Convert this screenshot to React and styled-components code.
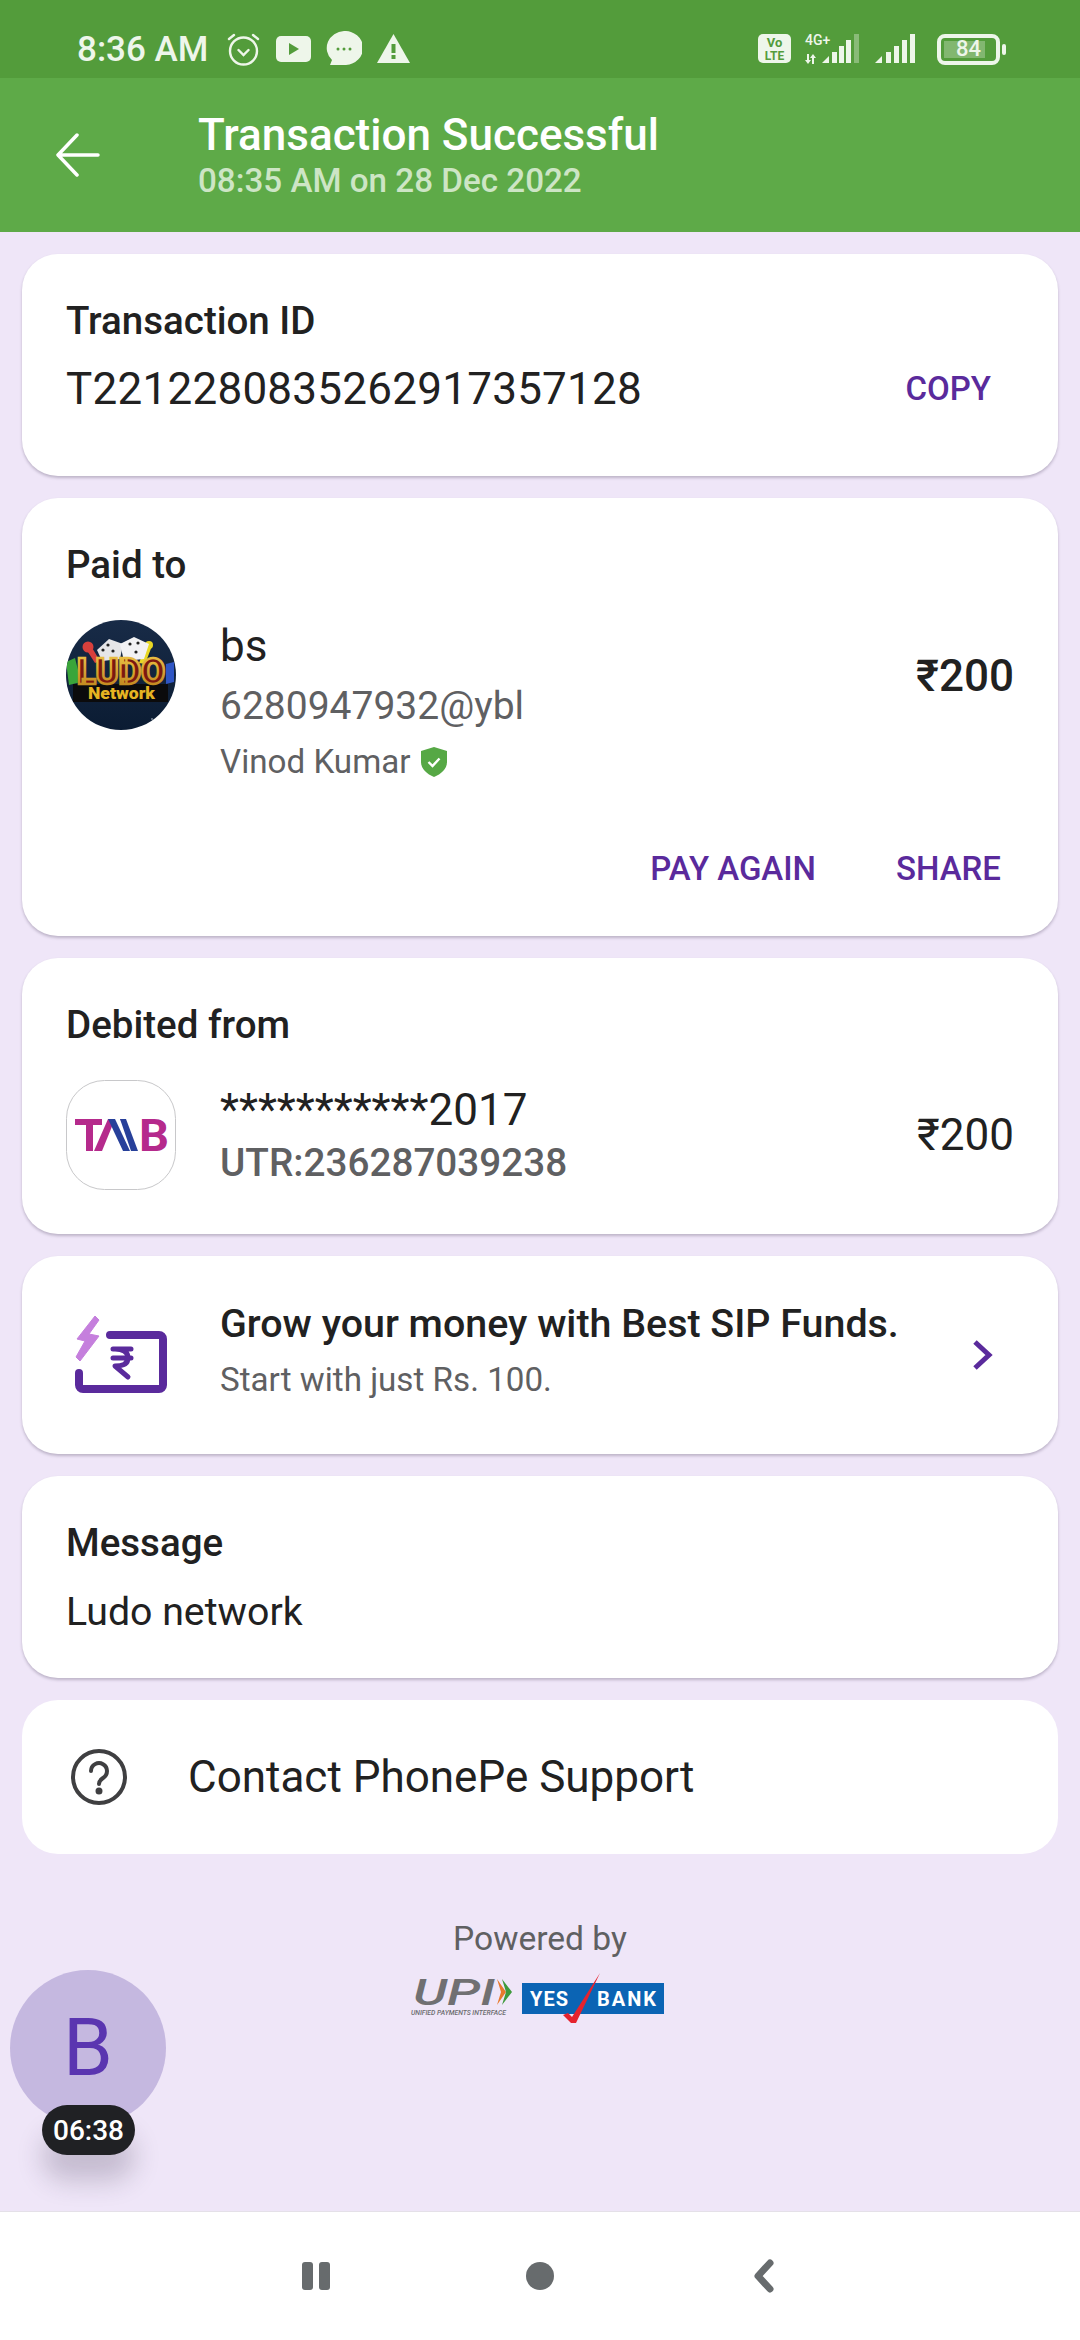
import React from 'react';
import styled, { createGlobalStyle } from 'styled-components';

const GlobalStyle = createGlobalStyle`
  html, body { margin: 0; padding: 0; background: #efe6f8; }
  * { box-sizing: border-box; }
`;

const Page = styled.div`
  position: relative;
  width: 1080px;
  height: 2340px;
  display: flex;
  flex-direction: column;
  overflow: hidden;
  background: #efe6f8;
  font-family: Roboto, "Noto Sans", sans-serif;
  color: #212121;
`;

const StatusBar = styled.div`
  height: 78px;
  flex: none;
  display: flex;
  align-items: center;
  justify-content: space-between;
  padding: 20px 80px 0 77px;
  background: #539c3b;
  color: #eef6ea;
`;
const StatusGroup = styled.div`
  display: flex;
  align-items: center;
  gap: ${(p) => p.$gap || 14}px;
`;
const Clock = styled.span`
  font-size: 35px;
  font-weight: 500;
  margin-right: 3px;
`;
const NetBlock = styled.div`
  position: relative;
  width: 56px;
  height: 30px;
`;
const NetLabel = styled.span`
  position: absolute;
  left: 0;
  top: -2px;
  font-size: 14px;
  font-weight: 500;
  line-height: 16px;
`;
const Battery = styled.div`
  position: relative;
  width: 63px;
  height: 31px;
  border: 4px solid #eef6ea;
  border-radius: 8px;
  display: flex;
  align-items: center;
  justify-content: center;
  font-size: 22px;
  font-weight: 500;
  line-height: 1;
  margin-left: 8px;
  &::before {
    content: '';
    position: absolute;
    left: 3px;
    top: 3px;
    bottom: 3px;
    width: 41px;
    background: rgba(238, 246, 234, 0.3);
  }
  &::after {
    content: '';
    position: absolute;
    right: -10px;
    top: 6px;
    width: 4px;
    height: 11px;
    border-radius: 2px;
    background: #eef6ea;
  }
`;

const Header = styled.header`
  height: 154px;
  flex: none;
  display: flex;
  align-items: center;
  padding: 0 0 0 56px;
  background: #5eaa48;
  color: #fff;
`;
const BackIcon = styled.svg`
  width: 44px;
  height: 44px;
  margin-right: 98px;
  flex: none;
`;
const HeaderTitle = styled.div`
  font-size: 44px;
  font-weight: 500;
  line-height: 50px;
`;
const HeaderSub = styled.div`
  font-size: 33.200px;
  font-weight: 500;
  line-height: 38px;
  margin-top: 2px;
  color: #cde5c5;
`;

const Content = styled.main`
  flex: 1;
  display: flex;
  flex-direction: column;
  gap: 22px;
  padding: 22px 22px 0;
`;
const Card = styled.section`
  height: ${(p) => p.$h}px;
  flex: none;
  padding: 0 44px;
  background: #fff;
  border-radius: 36px;
  box-shadow: 0 2px 3px rgba(60, 50, 80, 0.28);
  display: flex;
  flex-direction: column;
`;
const Label = styled.div`
  font-size: 38.500px;
  font-weight: 500;
  line-height: 44px;
  margin-top: 45px;
`;
const Row = styled.div`
  display: flex;
  align-items: ${(p) => p.$align || 'center'};
  margin-top: ${(p) => p.$top || 0}px;
`;
const BigValue = styled.div`
  flex: 1;
  font-size: 44px;
  letter-spacing: 0.25px;
  line-height: 52px;
`;
const TextLink = styled.span`
  font-size: 33px;
  font-weight: 500;
  line-height: 39px;
  color: #5a2a9c;
`;
const CopyLink = styled(TextLink)`
  margin-right: 23px;
  margin-top: -2px;
`;
const Info = styled.div`
  flex: 1;
  display: flex;
  flex-direction: column;
  margin-left: 44px;
`;
const Name = styled.div`
  font-size: 44px;
  line-height: 52px;
`;
const Upi = styled.div`
  font-size: 39px;
  line-height: 46px;
  margin-top: 11px;
  color: #5f6062;
`;
const Verified = styled.div`
  display: flex;
  align-items: center;
  gap: 10px;
  font-size: 33.200px;
  line-height: 40px;
  margin-top: 13px;
  color: #5f6062;
`;
const Amount = styled.div`
  font-size: 44px;
  font-weight: ${(p) => (p.$bold ? 500 : 400)};
  line-height: 52px;
`;
const AmountTop = styled(Amount)`
  margin-top: 30px;
`;
const Actions = styled.div`
  display: flex;
  justify-content: flex-end;
  gap: 80px;
  padding-right: 13px;
  margin-top: 67px;
`;
const Utr = styled.div`
  font-size: 38.700px;
  font-weight: 500;
  line-height: 46px;
  margin-top: 4px;
  color: #5f6062;
`;
const LogoBox = styled.svg`
  width: 110px;
  height: 110px;
  flex: none;
`;
const PromoCard = styled(Card)`
  flex-direction: row;
  align-items: center;
  padding: 0 62px 0 53px;
`;
const PromoIcon = styled.svg`
  width: 92px;
  height: 79px;
  flex: none;
  margin-top: -2px;
`;
const PromoText = styled.div`
  flex: 1;
  margin-left: 53px;
  margin-top: -9px;
`;
const PromoTitle = styled.div`
  font-size: 39.400px;
  font-weight: 500;
  line-height: 46px;
`;
const PromoSub = styled.div`
  font-size: 33.200px;
  line-height: 40px;
  margin-top: 13px;
  color: #5f6062;
`;
const Body = styled.div`
  font-size: 39.250px;
  line-height: 46px;
  margin-top: 24px;
`;
const SupportCard = styled(Card)`
  flex-direction: row;
  align-items: center;
  padding: 0 0 0 48px;
  box-shadow: none;
`;
const SupportText = styled.div`
  font-size: 44px;
  margin-left: 60px;
`;
const Powered = styled.div`
  display: flex;
  flex-direction: column;
  align-items: center;
  margin-top: 43px;
  color: #5f6062;
  font-size: 33.600px;
  line-height: 40px;
`;
const PartnerLogos = styled.svg`
  width: 260px;
  height: 54px;
  margin-top: 11px;
`;

const Floating = styled.div`
  position: absolute;
  left: 10px;
  top: 1970px;
  width: 156px;
  height: 156px;
  border-radius: 50%;
  background: #c5b8e0;
  display: flex;
  align-items: center;
  justify-content: center;
  font-size: 80px;
  color: #5a35b0;
`;
const TimerPill = styled.div`
  position: absolute;
  left: 42px;
  top: 2105px;
  width: 93px;
  height: 50px;
  border-radius: 25px;
  background: #202124;
  color: #fff;
  font-size: 28px;
  font-weight: 500;
  display: flex;
  align-items: center;
  justify-content: center;
  box-shadow: 0 26px 26px rgba(50, 40, 70, 0.22);
`;

const NavBar = styled.nav`
  height: 129px;
  flex: none;
  display: flex;
  align-items: center;
  padding-left: 302px;
  background: #fff;
  border-top: 1px solid #e4e0e8;
`;
const PauseIcon = styled.div`
  width: 28px;
  height: 28px;
  display: flex;
  justify-content: space-between;
  &::before, &::after {
    content: '';
    width: 11px;
    border-radius: 3px;
    background: #676b6d;
  }
`;
const HomeDot = styled.div`
  width: 28px;
  height: 28px;
  margin-left: 196px;
  border-radius: 50%;
  background: #676b6d;
`;
const BackChevron = styled.svg`
  width: 22px;
  height: 34px;
  margin-left: 199px;
`;

const BrandAvatar = () => (
  <LogoBox viewBox="0 0 110 110">
    <defs>
      <clipPath id="disc"><circle cx="55" cy="55" r="55" /></clipPath>
      <linearGradient id="sky" x1="0" y1="0" x2="0" y2="1">
        <stop offset="0" stopColor="#182b47" />
        <stop offset="1" stopColor="#0b1c33" />
      </linearGradient>
      <linearGradient id="gold" x1="0" y1="0" x2="0" y2="1">
        <stop offset="0" stopColor="#f2c94a" />
        <stop offset="1" stopColor="#b97e18" />
      </linearGradient>
    </defs>
    <g clipPath="url(#disc)">
      <rect width="110" height="110" fill="url(#sky)" />
      <path d="M0 42l9-4 6 24-12 3z" fill="#3aa53a" />
      <path d="M100 44l8-2v20l-8 2z" fill="#2f55c4" />
      <circle cx="22" cy="27" r="5.500" fill="#d8403c" />
      <path d="M20 29l5-3 9 15-5 2z" fill="#d8403c" />
      <circle cx="83" cy="25" r="4" fill="#e8d825" />
      <path d="M80 25l6 1-7 18-6-1z" fill="#e8d825" />
      <path d="M31 30l12-11 14 5-3 15-18 2z" fill="#e6e6e8" />
      <path d="M54 24l14-7 15 7-5 15-20 2z" fill="#f2f2f4" />
      <circle cx="42" cy="25" r="1.600" fill="#222" />
      <circle cx="37" cy="30" r="1.600" fill="#222" />
      <circle cx="47" cy="31" r="1.600" fill="#222" />
      <circle cx="64" cy="24" r="1.600" fill="#222" />
      <circle cx="72" cy="23" r="1.600" fill="#222" />
      <circle cx="70" cy="32" r="1.600" fill="#222" />
      <rect x="7" y="64" width="95" height="18" fill="#0b0b0c" />
      <text x="11" y="64" fontFamily="Roboto" fontWeight="900" fontSize="37" fill="#7c1810" stroke="url(#gold)" strokeWidth="2.600" textLength="88" lengthAdjust="spacingAndGlyphs">LUDO</text>
      <text x="22" y="79" fontFamily="Roboto" fontWeight="900" fontSize="16" fill="#e6b422" textLength="67" lengthAdjust="spacingAndGlyphs">Network</text>
      <circle cx="86" cy="99" r="0.800" fill="#cfd8e6" />
    </g>
  </LogoBox>
);

const BankLogo = () => (
  <LogoBox viewBox="0 0 110 110">
    <rect x="0.500" y="0.500" width="109" height="109" rx="38" fill="#fff" stroke="#c8c8ca" />
    <path d="M9 39h27v6h-9v26h-7V45H9z" fill="#b52a8c" />
    <path d="M28 71l14-32h7L36 71z" fill="#b52a8c" />
    <path d="M54 39h6L60 50z" fill="#b52a8c" />
    <path d="M42 39h7l15 32h-7z" fill="#27409a" />
    <path d="M54 39h6l12 32h-7z" fill="#27409a" />
    <text x="73" y="71" fontFamily="Roboto" fontWeight="700" fontSize="45" fill="#b52a8c" textLength="30" lengthAdjust="spacingAndGlyphs">B</text>
  </LogoBox>
);

const App = () => (
  <Page>
    <GlobalStyle />
    <StatusBar>
      <StatusGroup $gap={15}>
        <Clock>8:36 AM</Clock>
        <svg width="35" height="36" viewBox="0 0 35 36" fill="none" stroke="#eef6ea" strokeWidth="2.400" strokeLinecap="round">
          <circle cx="17.500" cy="20" r="13.500" />
          <path d="M12.500 19l5 5 5-5M3 8l5-4M32 8l-5-4" />
        </svg>
        <svg width="35" height="27" viewBox="0 0 35 27">
          <rect width="35" height="26" rx="5" fill="#eef6ea" />
          <path d="M13 7l10 6-10 6z" fill="#539c3b" />
        </svg>
        <svg width="36" height="36" viewBox="0 0 36 36">
          <path d="M18 0a18 17 0 0 1 2 34H4l2-5A18 17 0 0 1 18 0z" fill="#eef6ea" />
          <circle cx="12" cy="18" r="1.500" fill="#539c3b" />
          <circle cx="18" cy="18" r="1.500" fill="#539c3b" />
          <circle cx="24" cy="18" r="1.500" fill="#539c3b" />
        </svg>
        <svg width="33" height="30" viewBox="0 0 33 30">
          <path d="M16.500 0L33 29H0z" fill="#eef6ea" />
          <rect x="14.500" y="10" width="4" height="9" fill="#539c3b" />
          <rect x="14.500" y="21" width="4" height="4" fill="#539c3b" />
        </svg>
      </StatusGroup>
      <StatusGroup $gap={14}>
        <svg width="33" height="30" viewBox="0 0 33 30">
          <rect width="33" height="29" rx="5" fill="#eef6ea" />
          <text x="16.500" y="13" textAnchor="middle" fontFamily="Roboto" fontWeight="700" fontSize="13" fill="#539c3b">Vo</text>
          <text x="16.500" y="26" textAnchor="middle" fontFamily="Roboto" fontWeight="700" fontSize="12" fill="#539c3b">LTE</text>
        </svg>
        <NetBlock>
          <svg width="56" height="30" viewBox="0 0 56 30" fill="#eef6ea">
            <path d="M2 20h2v6h2l-3 4-3-4h2zM8 20l3 4H9v6H7v-6H5z" />
            <path d="M17 29l7-7v7z" />
            <rect x="27" y="18" width="5" height="11" />
            <rect x="34" y="12" width="5" height="17" />
            <rect x="41" y="6" width="5" height="23" />
            <rect x="49" y="0" width="5" height="29" opacity="0.35" />
          </svg>
          <NetLabel>4G+</NetLabel>
        </NetBlock>
        <svg width="40" height="30" viewBox="0 0 40 30" fill="#eef6ea">
          <path d="M0 29l7-7v7z" />
          <rect x="11" y="18" width="5" height="11" />
          <rect x="19" y="12" width="5" height="17" />
          <rect x="27" y="6" width="5" height="23" />
          <rect x="35" y="0" width="5" height="29" />
        </svg>
        <Battery>84</Battery>
      </StatusGroup>
    </StatusBar>

    <Header>
      <BackIcon viewBox="0 0 44 44" fill="none" stroke="#fff" strokeWidth="3.500" strokeLinecap="round" strokeLinejoin="round">
        <path d="M42 22H3M21 2L2 22l19 20" />
      </BackIcon>
      <div>
        <HeaderTitle>Transaction Successful</HeaderTitle>
        <HeaderSub>08:35 AM on 28 Dec 2022</HeaderSub>
      </div>
    </Header>

    <Content>
      <Card $h={222}>
        <Label>Transaction ID</Label>
        <Row $top={20}>
          <BigValue>T2212280835262917357128</BigValue>
          <CopyLink>COPY</CopyLink>
        </Row>
      </Card>

      <Card $h={438}>
        <Label>Paid to</Label>
        <Row $top={33} $align="flex-start">
          <BrandAvatar />
          <Info>
            <Name>bs</Name>
            <Upi>6280947932@ybl</Upi>
            <Verified>
              Vinod Kumar
              <svg width="26" height="30" viewBox="0 0 26 30">
                <path d="M13 0l13 4v11c0 7-6 12-13 15C6 27 0 22 0 15V4z" fill="#56a845" />
                <path d="M7.500 15l4 4 7-7.500" fill="none" stroke="#fff" strokeWidth="2.400" />
              </svg>
            </Verified>
          </Info>
          <AmountTop $bold>₹200</AmountTop>
        </Row>
        <Actions>
          <TextLink>PAY AGAIN</TextLink>
          <TextLink>SHARE</TextLink>
        </Actions>
      </Card>

      <Card $h={276}>
        <Label>Debited from</Label>
        <Row $top={33}>
          <BankLogo />
          <Info>
            <Name>***********2017</Name>
            <Utr>UTR:236287039238</Utr>
          </Info>
          <Amount>₹200</Amount>
        </Row>
      </Card>

      <PromoCard $h={198}>
        <PromoIcon viewBox="0 0 92 79" fill="none">
          <path d="M35 20h49a4 4 0 0 1 4 4v46a4 4 0 0 1-4 4H8a4 4 0 0 1-4-4V58" stroke="#5a2a9c" strokeWidth="8" strokeLinecap="round" strokeLinejoin="round" />
          <path d="M20 1l4 4-10 14 10 2L5 46l-4-4 9-16-8-2z" fill="#c57fdd" stroke="#c57fdd" strokeWidth="1" strokeLinejoin="round" />
          <path d="M38 34h18M38 43h18M40 34c10 0 13 4 13 9s-4 8-13 8l13 11" stroke="#5a2a9c" strokeWidth="5" strokeLinecap="round" strokeLinejoin="round" />
        </PromoIcon>
        <PromoText>
          <PromoTitle>Grow your money with Best SIP Funds.</PromoTitle>
          <PromoSub>Start with just Rs. 100.</PromoSub>
        </PromoText>
        <svg width="26" height="32" viewBox="0 0 26 32" fill="none" stroke="#5a2a9c" strokeWidth="5">
          <path d="M5 3l14 13L5 29" />
        </svg>
      </PromoCard>

      <Card $h={202}>
        <Label>Message</Label>
        <Body>Ludo network</Body>
      </Card>

      <SupportCard $h={154}>
        <svg width="58" height="58" viewBox="0 0 58 58" fill="none" stroke="#3f3f41" strokeWidth="4" strokeLinecap="round">
          <circle cx="29" cy="29" r="26" />
          <path d="M21 23a8 8 0 1 1 12 7c-3 2-4 3-4 6" />
          <circle cx="29" cy="43" r="1.500" fill="#3f3f41" />
        </svg>
        <SupportText>Contact PhonePe Support</SupportText>
      </SupportCard>

      <Powered>
        Powered by
        <PartnerLogos viewBox="0 0 260 54">
          <text x="3" y="35" fontFamily="Roboto" fontStyle="italic" fontWeight="500" fontSize="37" fill="#707072" textLength="82" lengthAdjust="spacingAndGlyphs">UPI</text>
          <path d="M87 9l9 13-9 13 4-13z" fill="#e8792c" />
          <path d="M92 9l10 13-10 13 4-13z" fill="#3e9a3c" />
          <text x="1" y="45" fontFamily="Roboto" fontStyle="italic" fontWeight="500" fontSize="7" fill="#6b6b6d" textLength="95" lengthAdjust="spacingAndGlyphs">UNIFIED PAYMENTS INTERFACE</text>
          <rect x="112" y="13" width="142" height="31" fill="#0b64b4" />
          <text x="120" y="36" fontFamily="Roboto" fontWeight="700" fontSize="20" fill="#fff" textLength="38" lengthAdjust="spacing">YES</text>
          <text x="187" y="36" fontFamily="Roboto" fontWeight="700" fontSize="20" fill="#fff" textLength="59" lengthAdjust="spacing">BANK</text>
          <path d="M190 3L166 53h-5l-8-8 5-2 4 4z" fill="#e5232e" />
        </PartnerLogos>
      </Powered>
    </Content>

    <Floating>B</Floating>
    <TimerPill>06:38</TimerPill>

    <NavBar>
      <PauseIcon />
      <HomeDot />
      <BackChevron viewBox="0 0 22 34" fill="none" stroke="#676b6d" strokeWidth="7" strokeLinecap="round" strokeLinejoin="round">
        <path d="M17 4L5 17l12 13" />
      </BackChevron>
    </NavBar>
  </Page>
);

export default App;
